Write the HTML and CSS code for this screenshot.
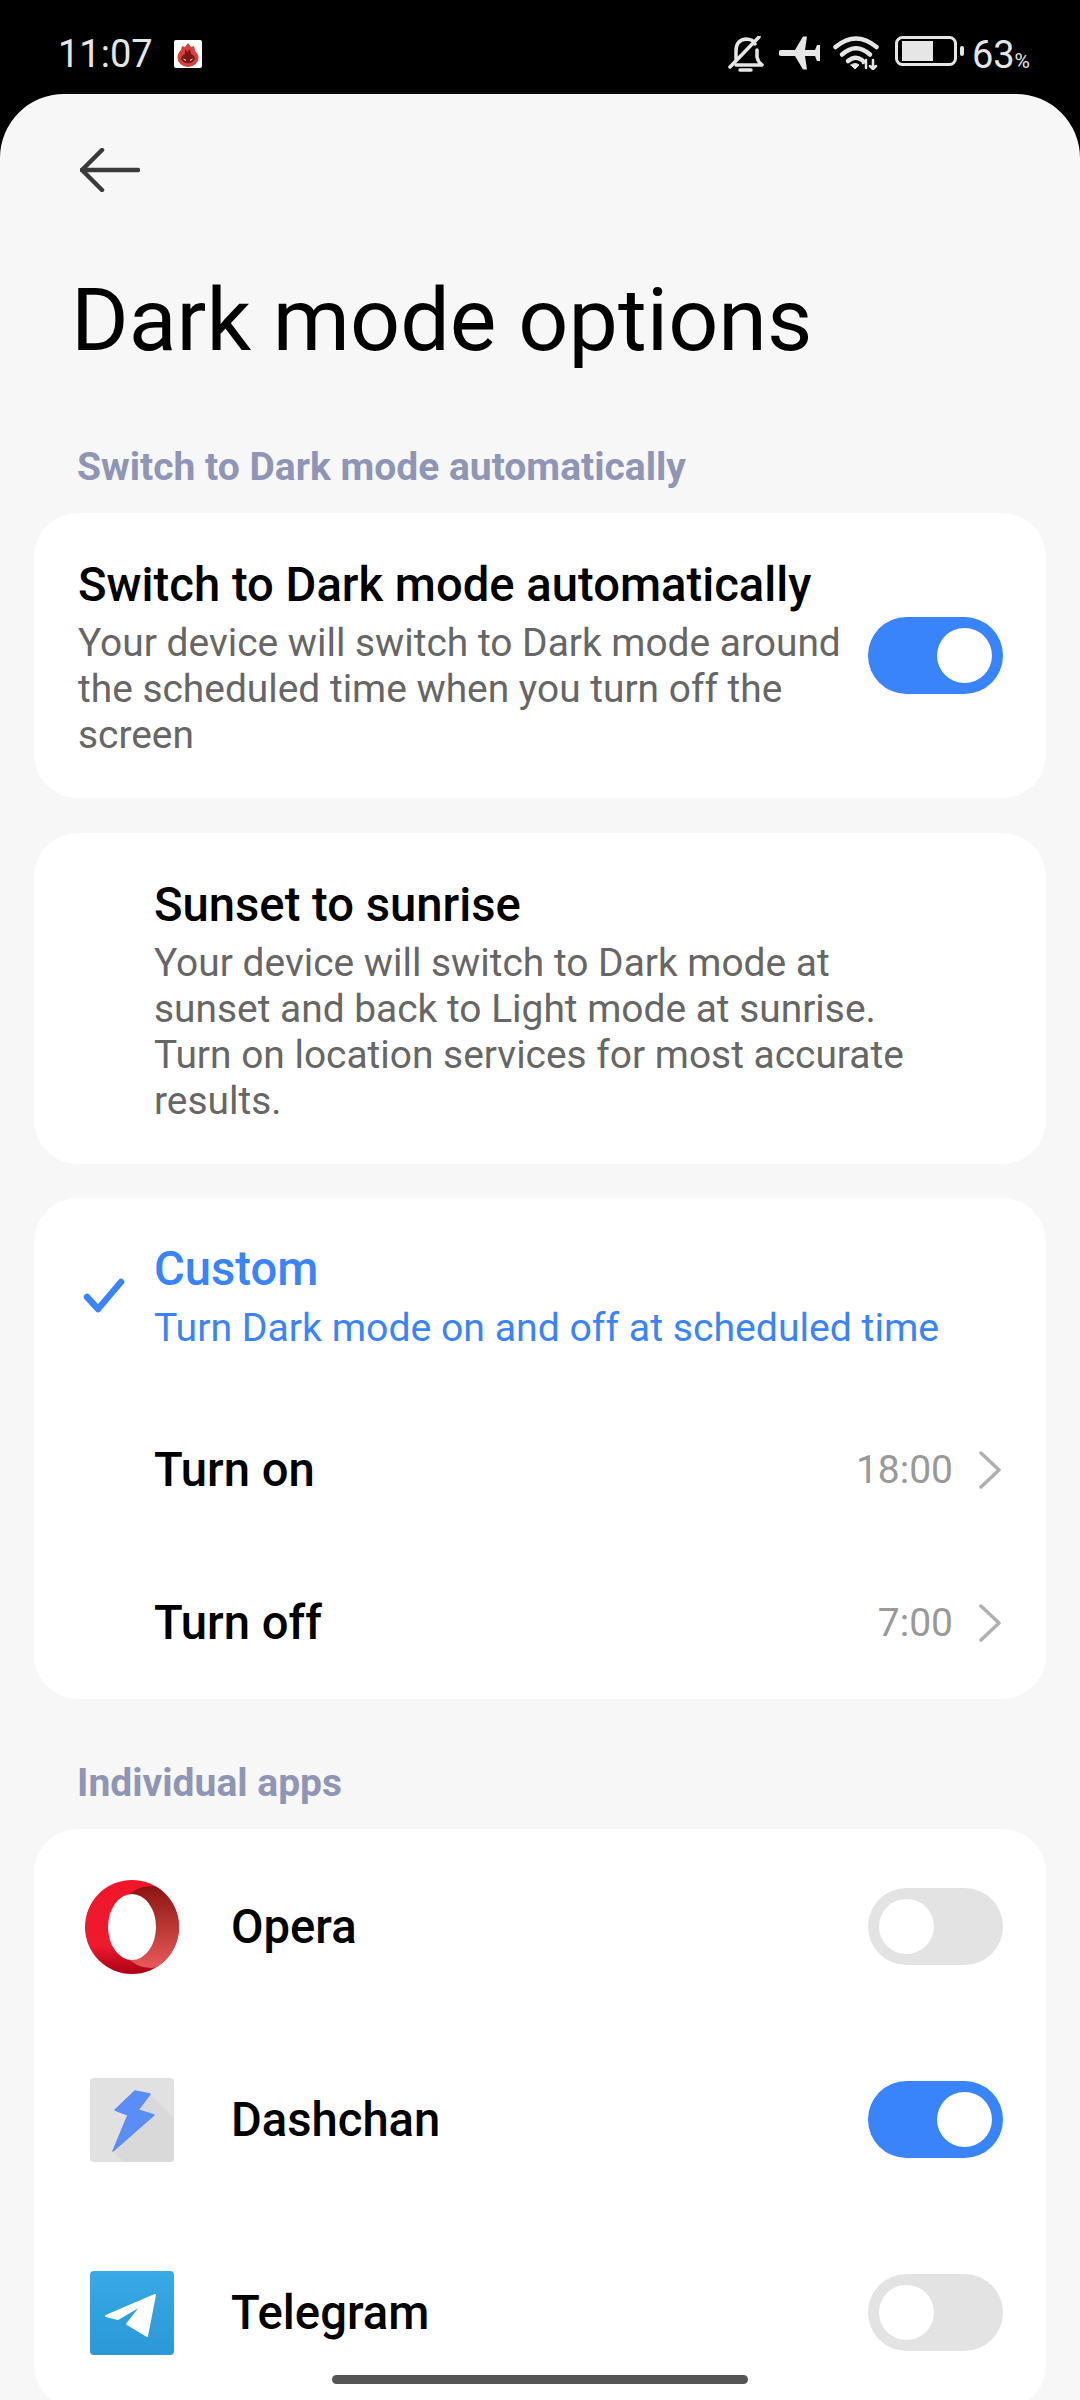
FILE: index.html
```html
<!DOCTYPE html>
<html lang="en">
<head>
    <meta charset="UTF-8">
    <meta name="viewport" content="width=device-width, initial-scale=1.0">
    <title>Dark mode options</title>
    <link rel="stylesheet" href="styles.css">
</head>
<body>
    <div class="status-bar">
        <div class="status-left">
            <span class="clock">11:07</span>
            <svg class="antutu" width="28" height="28" viewBox="0 0 28 28">
                <rect width="28" height="28" rx="2" fill="#fff"/>
                <path d="M14 3 L17 7 L20 6 L21 11 Q25 15 24.500 18 A10.500 9 0 0 1 3.500 18 Q3.500 13 7 10 L8 6 L11 7z" fill="#d9403c"/>
                <path d="M11 9 L13 12 L16 9 L17 14 Q21 16 21 19 A7.500 6.500 0 0 1 7 19 Q7 16 11 14z" fill="#7a1716"/>
                <path d="M9.500 19 L12 20.500 M18.500 19 L16 20.500" stroke="#fff" stroke-width="1"/>
            </svg>
        </div>
        <div class="status-right">
            <svg class="ic-bell" width="36" height="37" viewBox="0 0 36 37" fill="none" stroke="#e6e6e6" stroke-width="3.500" stroke-linecap="round" stroke-linejoin="round">
                <path d="M8 23 V15 Q8 4 18 3 Q25 3 27 8"/>
                <path d="M29 14 V21 Q30 26 34 29 H8"/>
                <path d="M2 31 L31 1"/>
                <path d="M12 34 H23" stroke-width="3.500"/>
            </svg>
            <svg class="ic-plane" width="42" height="34" viewBox="0 0 42 34">
                <path d="M2.500 14 H16 L24 0.500 H28 L26 14 H36 L38 9 H41 V25 H38 L36 20 H26 L28 33.500 H24 L16 20 H2.500 a3 3 0 0 1 0-6z" fill="#e6e6e6"/>
            </svg>
            <svg class="ic-wifi" width="47" height="34" viewBox="0 0 47 34" fill="none" stroke="#e6e6e6" stroke-width="4.500" stroke-linecap="round">
                <path d="M2.500 11 Q23 -6 43.500 11"/>
                <path d="M9 18.500 Q23 6 37 18.500"/>
                <path d="M15 25 Q22 19 29 24"/>
                <path d="M18 29 L22 33 L26 29 Q22 26 18 29z" fill="#e6e6e6" stroke-width="1"/>
                <path d="M33 32 V25 M30 27 L33 24 M40 24 V32 M37 30 L40 33 M43 30 L40 33" stroke-width="2.500"/>
            </svg>
            <svg class="ic-battery" width="69" height="30" viewBox="0 0 69 30">
                <rect x="1.500" y="1.500" width="59" height="27" rx="6" fill="none" stroke="#e6e6e6" stroke-width="3"/>
                <rect x="7" y="5" width="31" height="20" fill="#e6e6e6"/>
                <rect x="65" y="10" width="4" height="10" rx="2" fill="#e6e6e6"/>
            </svg>
            <span class="batt-num">63<small>%</small></span>
        </div>
    </div>

    <div class="sheet">
        <div class="top-nav">
            <svg width="60" height="44" viewBox="0 0 60 44" fill="none" stroke="#3a3a3a" stroke-width="4.500" stroke-linecap="round" stroke-linejoin="round">
                <path d="M2 22 H58"/>
                <path d="M22 2 L2 22 L22 42"/>
            </svg>
        </div>
        <h1 class="page-title">Dark mode options</h1>

        <div class="section-label">Switch to Dark mode automatically</div>
        <div class="card auto-card">
            <div class="auto-text">
                <div class="item-title">Switch to Dark mode automatically</div>
                <div class="item-desc">Your device will switch to Dark mode around the scheduled time when you turn off the screen</div>
            </div>
            <div class="toggle on"><span class="knob"></span></div>
        </div>

        <div class="card sunset-card">
            <div class="item-title">Sunset to sunrise</div>
            <div class="item-desc">Your device will switch to Dark mode at sunset and back to Light mode at sunrise. Turn on location services for most accurate results.</div>
        </div>

        <div class="card custom-card">
            <div class="custom-row">
                <svg class="check" width="42" height="36" viewBox="0 0 42 36" fill="none" stroke="#3a84fb" stroke-width="6.500" stroke-linecap="round" stroke-linejoin="round">
                    <path d="M4 19 L15 31 L38 4"/>
                </svg>
                <div class="item-title blue">Custom</div>
                <div class="item-desc blue">Turn Dark mode on and off at scheduled time</div>
            </div>
            <div class="time-row">
                <span class="time-label">Turn on</span>
                <span class="time-value">18:00</span>
                <svg width="22" height="38" viewBox="0 0 22 38" fill="none" stroke="#b0b0b0" stroke-width="3.500" stroke-linecap="round" stroke-linejoin="round"><path d="M2 2 L20 19 L2 36"/></svg>
            </div>
            <div class="time-row">
                <span class="time-label">Turn off</span>
                <span class="time-value">7:00</span>
                <svg width="22" height="38" viewBox="0 0 22 38" fill="none" stroke="#b0b0b0" stroke-width="3.500" stroke-linecap="round" stroke-linejoin="round"><path d="M2 2 L20 19 L2 36"/></svg>
            </div>
        </div>

        <div class="section-label apps-label">Individual apps</div>
        <div class="card apps-card">
            <div class="app-row">
                <div class="app-icon">
                    <svg width="94" height="94" viewBox="0 0 94 94">
                        <defs>
                            <linearGradient id="operaRed" x1="0" y1="0" x2="0" y2="1">
                                <stop offset="0" stop-color="#f0162a"/>
                                <stop offset="0.7" stop-color="#ee1a2e"/>
                                <stop offset="1" stop-color="#a90014"/>
                            </linearGradient>
                            <linearGradient id="operaDark" x1="0" y1="0" x2="0" y2="1">
                                <stop offset="0" stop-color="#8a1510"/>
                                <stop offset="1" stop-color="#e85a5a"/>
                            </linearGradient>
                            <clipPath id="operaClip"><circle cx="47" cy="47" r="47"/></clipPath>
                        </defs>
                        <circle cx="47" cy="47" r="47" fill="url(#operaRed)"/>
                        <ellipse cx="66" cy="47" rx="36" ry="41" fill="url(#operaDark)" clip-path="url(#operaClip)"/>
                        <ellipse cx="47" cy="47" rx="24" ry="33" fill="#fff"/>
                    </svg>
                </div>
                <span class="app-name">Opera</span>
                <div class="toggle"><span class="knob"></span></div>
            </div>
            <div class="app-row">
                <div class="app-icon">
                    <svg width="84" height="84" viewBox="0 0 84 84">
                        <rect width="84" height="84" rx="4" fill="#e1e1e1"/>
                        <path d="M60 16 L84 40 V80 Q84 84 80 84 H34 L23 73z" fill="#d9d9d9"/>
                        <path d="M45 13 L60 16 L48 32 L64 37 L23 73 L38 37 L25 32z" fill="#5a8df5" stroke="#5a8df5" stroke-width="1.500" stroke-linejoin="round"/>
                    </svg>
                </div>
                <span class="app-name">Dashchan</span>
                <div class="toggle on"><span class="knob"></span></div>
            </div>
            <div class="app-row">
                <div class="app-icon">
                    <svg width="84" height="84" viewBox="0 0 84 84">
                        <defs>
                            <linearGradient id="tgBlue" x1="0" y1="0" x2="0" y2="1">
                                <stop offset="0" stop-color="#38aae6"/>
                                <stop offset="1" stop-color="#2a98d4"/>
                            </linearGradient>
                        </defs>
                        <rect width="84" height="84" rx="4" fill="url(#tgBlue)"/>
                        <path d="M65 24 L16 45 L28 48 L52 34 L37 53 L57 65z" fill="#fff" stroke="#fff" stroke-width="2" stroke-linejoin="round"/>
                    </svg>
                </div>
                <span class="app-name">Telegram</span>
                <div class="toggle"><span class="knob"></span></div>
            </div>
        </div>
    </div>

    <div class="home-pill"></div>
</body>
</html>
```

FILE: styles.css
```css
:root {
    --blue: #3a84fb;
    --sheet-bg: #f7f7f7;
}

* {
    box-sizing: border-box;
}

html, body {
    margin: 0;
    height: 2400px;
    overflow: hidden;
}

body {
    position: relative;
    background: #000;
    font-family: Roboto, "Noto Sans", sans-serif;
    color: #000;
}

.status-bar {
    height: 94px;
    display: flex;
    justify-content: space-between;
    padding: 36px 50px 0 58px;
    color: #e6e6e6;
}

.status-left {
    display: flex;
    align-items: flex-start;
    gap: 21px;
}

.antutu {
    margin-top: 4px;
}

.clock {
    font-size: 38px;
    line-height: 36px;
}

.status-right {
    display: flex;
    align-items: flex-start;
    gap: 15px;
}

.ic-plane {
    margin-right: -3px;
}

.batt-num {
    font-size: 38px;
    line-height: 38px;
    margin-left: -7px;
}

.batt-num small {
    font-size: 21px;
}

.sheet {
    height: 2306px;
    background: var(--sheet-bg);
    border-radius: 64px 64px 0 0;
    padding: 0 34px;
}

.top-nav {
    padding: 54px 0 0 46px;
    height: 98px;
}

.page-title {
    margin: 78px 0 0 37px;
    font-size: 88px;
    line-height: 100px;
    font-weight: 400;
}

.section-label {
    margin: 73px 0 0 43px;
    font-size: 39px;
    line-height: 48px;
    font-weight: 700;
    color: #8f95b5;
}

.card {
    background: #fff;
    border-radius: 44px;
    margin-top: 35px;
}

.section-label + .card {
    margin-top: 22px;
}

.item-title {
    font-size: 47.200px;
    line-height: 56px;
    font-weight: 460;
    margin-bottom: 7px;
}

.item-desc {
    font-size: 38.900px;
    line-height: 46px;
    color: #666;
}

.blue {
    color: var(--blue);
}

.custom-row .item-desc {
    font-size: 39.200px;
    margin-top: 8px;
}

.auto-card {
    display: flex;
    align-items: center;
    justify-content: space-between;
    padding: 44px 43px 40px 44px;
}

.auto-card .toggle {
    margin-top: -5px;
}

.auto-text {
    width: 790px;
}

.toggle {
    width: 135px;
    height: 77px;
    border-radius: 39px;
    background: #e3e3e3;
    display: flex;
    align-items: center;
    justify-content: flex-start;
    padding: 0 11px;
    flex-shrink: 0;
}

.toggle.on {
    background: var(--blue);
    justify-content: flex-end;
}

.knob {
    width: 55px;
    height: 55px;
    border-radius: 50%;
    background: #fff;
}

.sunset-card {
    padding: 44px 102px 40px 120px;
}

.custom-card {
    margin-top: 34px;
    padding-top: 43px;
}

.custom-row {
    position: relative;
    padding: 0 40px 0 120px;
}

.check {
    position: absolute;
    left: 49px;
    top: 37px;
}

.time-row {
    height: 153px;
    display: flex;
    align-items: center;
    padding: 0 45px 0 120px;
}

.custom-row + .time-row {
    margin-top: 42px;
}

.time-label {
    font-size: 47.200px;
    font-weight: 460;
    flex: 1;
}

.time-value {
    font-size: 39px;
    color: #999;
    margin-right: 26px;
}

.apps-label {
    margin-top: 60px;
}

.apps-card {
    padding-top: 1px;
}

.app-row {
    height: 193px;
    display: flex;
    align-items: center;
    padding: 0 43px 0 44px;
}

.app-icon {
    width: 108px;
    display: flex;
    justify-content: center;
    flex-shrink: 0;
    margin-right: 45px;
}

.app-name {
    font-size: 47.200px;
    font-weight: 460;
    flex: 1;
}

.home-pill {
    position: absolute;
    left: 332px;
    bottom: 16px;
    width: 416px;
    height: 9px;
    border-radius: 5px;
    background: #555;
}
```
